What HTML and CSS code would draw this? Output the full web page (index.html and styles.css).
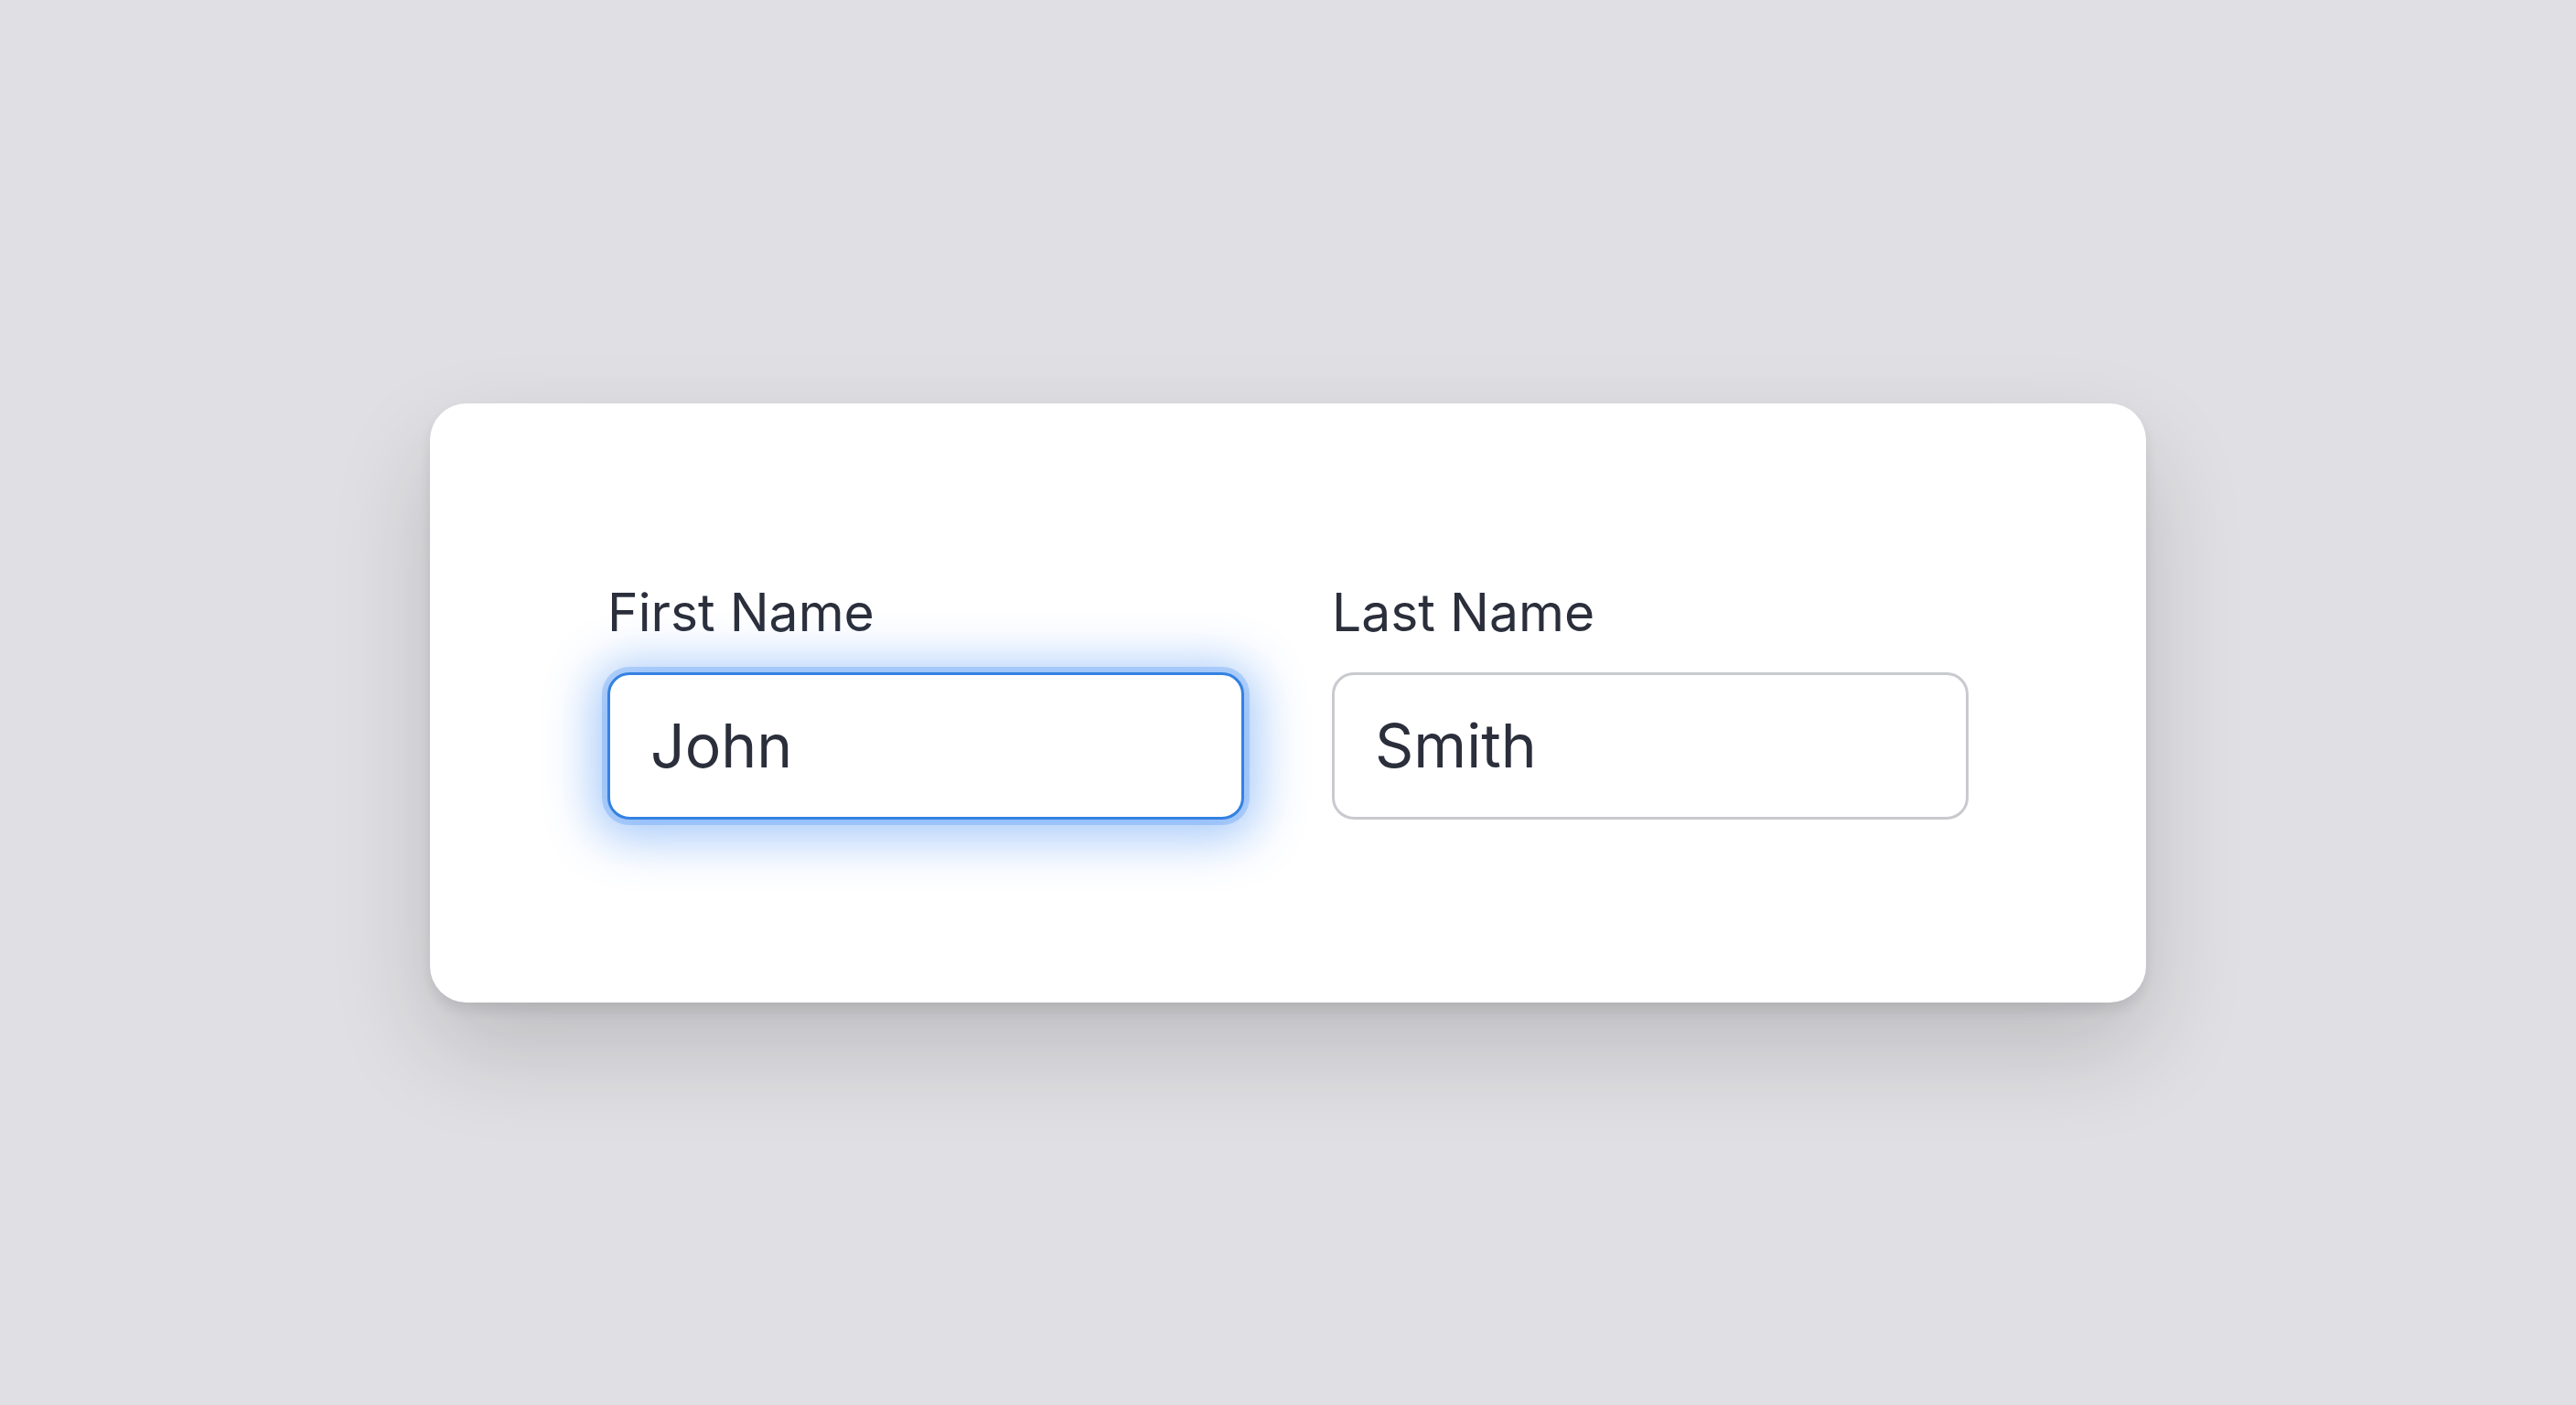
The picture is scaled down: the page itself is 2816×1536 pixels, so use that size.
FILE: index.html
```html
<!DOCTYPE html>
<html lang="en">
<head>
<meta charset="utf-8">
<title>Name Form</title>
<link rel="stylesheet" href="styles.css">
</head>
<body>
<main class="stage">
  <form class="card">
    <div class="field">
      <label class="label" for="first">First Name</label>
      <input class="input input-focus" id="first" type="text" value="John" readonly>
    </div>
    <div class="field">
      <label class="label" for="last">Last Name</label>
      <input class="input" id="last" type="text" value="Smith" readonly>
    </div>
  </form>
</main>
</body>
</html>
```

FILE: styles.css
```css
* {
  box-sizing: border-box;
}

html, body {
  margin: 0;
  padding: 0;
  height: 100%;
}

body {
  background: #e0e0e4;
  font-family: Inter, "Noto Sans", "Liberation Sans", sans-serif;
  color: #2b2f3b;
}

.stage {
  height: 100vh;
  display: flex;
  align-items: center;
  justify-content: center;
}

.card {
  width: 1876px;
  height: 655px;
  background: #ffffff;
  border-radius: 40px;
  padding: 195px 194px 0;
  display: grid;
  grid-template-columns: 696px 696px;
  column-gap: 96px;
  align-content: start;
  box-shadow: 0 8px 14px rgba(0, 0, 0, 0.09), 0 50px 110px rgba(0, 0, 0, 0.16);
}

.field {
  display: flex;
  flex-direction: column;
}

.label {
  font-size: 57px;
  line-height: 68px;
  font-weight: 400;
  color: #2b2f3b;
  margin-bottom: 31px;
}

.input {
  height: 161px;
  width: 100%;
  border: 3px solid #c9cacf;
  border-radius: 24px;
  background: #ffffff;
  padding: 0 0 0 44px;
  font-family: Inter, "Noto Sans", "Liberation Sans", sans-serif;
  font-size: 66px;
  color: #2b2f3b;
  outline: none;
}

.input-focus {
  border-color: #3481e2;
  box-shadow: 0 0 0 6px rgba(64, 140, 245, 0.28), 0 6px 52px 16px rgba(64, 140, 245, 0.45);
}
```
